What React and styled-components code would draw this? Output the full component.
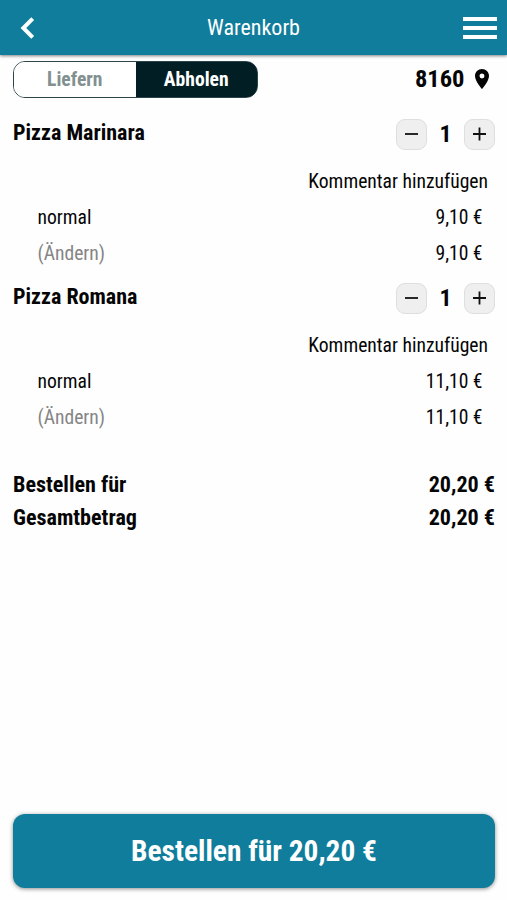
import React from "react";
import styled, { createGlobalStyle } from "styled-components";

const teal = "#0f7d9b";

const GlobalStyle = createGlobalStyle`
  * { box-sizing: border-box; }
  body { margin: 0; background: #fefefe; }
  button { font: inherit; font-stretch: 75%; padding: 0; cursor: pointer; }
`;

const Page = styled.div`
  display: flex;
  flex-direction: column;
  height: 900px;
  font-family: "Roboto Condensed", Roboto, sans-serif;
  font-stretch: 75%;
  font-size: 19.6px;
  font-weight: 450;
  color: #050505;
  overflow: hidden;
`;

const Header = styled.header`
  display: grid;
  grid-template-columns: 60px 1fr 60px;
  align-items: center;
  height: 55px;
  flex: none;
  background: ${teal};
  color: #fff;
  box-shadow: 0 1px 3px rgba(0, 0, 0, 0.5);
`;

const HeaderButton = styled.button`
  display: flex;
  justify-content: ${(p) => p.$align};
  border: 0;
  background: none;
  color: #fff;
  padding: 0 10px 0 20px;
`;

const Title = styled.h1`
  margin: 0;
  text-align: center;
  font-size: 22px;
  font-weight: 450;
  line-height: 55px;
`;

const Toolbar = styled.div`
  display: flex;
  align-items: center;
  justify-content: space-between;
  height: 37px;
  margin: 6px 13px 0;
  flex: none;
`;

const Segments = styled.div`
  display: flex;
  width: 245px;
  height: 37px;
  border: 1px solid #2c454b;
  border-radius: 12px;
  background: linear-gradient(90deg, #fff 50%, #021e25 50%);
  overflow: hidden;
`;

const Segment = styled.button`
  flex: 1;
  border: 0;
  padding-bottom: 1px;
  font-weight: 700;
  font-size: 19.6px;
  background: ${(p) => (p.$active ? "#021e25" : "#fff")};
  color: ${(p) => (p.$active ? "#fff" : "#829090")};
`;

const Postcode = styled.div`
  display: flex;
  align-items: center;
  gap: 11px;
  padding: 0 4.6px 2px 0;
  font-size: 24.5px;
  font-weight: 700;
`;

const Item = styled.section`
  height: 164px;
  flex: none;
  padding: 0 12px 0 13px;
`;

const ItemHead = styled.div`
  display: flex;
  justify-content: space-between;
  height: 31px;
`;

const ItemName = styled.h2`
  margin: 0;
  font-size: 22px;
  line-height: 27px;
  font-weight: 700;
`;

const Stepper = styled.div`
  display: grid;
  grid-template-columns: 31px 37px 31px;
  align-items: center;
  text-align: center;
`;

const StepButton = styled.button`
  display: grid;
  place-items: center;
  width: 31px;
  height: 31px;
  border: 1px solid #dedede;
  border-radius: 9px;
  background: #efefef;
  color: #111;
`;

const Count = styled.span`
  padding-bottom: 1px;
  font-size: 24px;
  font-weight: 700;
`;

const Comment = styled.div`
  margin-top: 14px;
  padding-right: 7px;
  height: 36px;
  line-height: 36px;
  text-align: right;
`;

const Line = styled.div`
  display: flex;
  justify-content: space-between;
  height: 36px;
  line-height: 36px;
  padding: 0 12.5px 0 24.5px;
`;

const Muted = styled.span`
  color: #858585;
`;

const Totals = styled.div`
  flex: none;
  margin-top: 21px;
  padding: 0 12px 0 13px;
`;

const Total = styled.div`
  display: flex;
  justify-content: space-between;
  height: 33px;
  line-height: 33px;
  font-size: 22.1px;
  font-weight: 700;
`;

const OrderButton = styled.button`
  margin: auto 12px 12px 13px;
  height: 74px;
  flex: none;
  border: 0;
  border-radius: 12px;
  padding-bottom: 1px;
  background: ${teal};
  color: #fff;
  font-size: 29.4px;
  font-weight: 700;
  box-shadow: 0 1px 4px rgba(0, 0, 0, 0.45);
`;

const items = [
  { name: "Pizza Marinara", price: "9,10 €" },
  { name: "Pizza Romana", price: "11,10 €" },
];

function CartItem({ name, price }) {
  return (
    <Item>
      <ItemHead>
        <ItemName>{name}</ItemName>
        <Stepper>
          <StepButton aria-label="−">
            <svg width="15" height="15" viewBox="0 0 15 15" stroke="currentColor" strokeWidth="1.8">
              <path d="M1 7h13" />
            </svg>
          </StepButton>
          <Count>1</Count>
          <StepButton aria-label="+">
            <svg width="15" height="15" viewBox="0 0 15 15" stroke="currentColor" strokeWidth="1.8">
              <path d="M1 7h13M7.5 .5v13" />
            </svg>
          </StepButton>
        </Stepper>
      </ItemHead>
      <Comment><span>Kommentar hinzufügen</span></Comment>
      <Line><span>normal</span><span>{price}</span></Line>
      <Line><Muted>(Ändern)</Muted><span>{price}</span></Line>
    </Item>
  );
}

const Items = styled.div`
  margin-top: 20.6px;
  flex: none;
`;

const MenuIcon = styled.svg`
  flex: none;
`;

export default function App() {
  return (
    <Page>
      <GlobalStyle />
      <Header>
        <HeaderButton $align="flex-start">
          <svg width="16" height="22" viewBox="0 0 16 22" fill="none" stroke="currentColor" strokeWidth="4">
            <path d="M12.7 1.7L3.4 11l9.3 9.3" />
          </svg>
        </HeaderButton>
        <Title>Warenkorb</Title>
        <HeaderButton $align="flex-end">
          <MenuIcon width="34" height="24" viewBox="0 0 34 24" fill="currentColor">
            <path d="M0 1h34v4H0zM0 10h34v4H0zM0 19h34v4H0z" />
          </MenuIcon>
        </HeaderButton>
      </Header>
      <Toolbar>
        <Segments>
          <Segment>Liefern</Segment>
          <Segment $active>Abholen</Segment>
        </Segments>
        <Postcode>
          <span>8160</span>
          <svg width="14" height="20" viewBox="5 2 14 20" fill="currentColor">
            <path d="M12 2C8.13 2 5 5.13 5 9c0 5.25 7 13 7 13s7-7.75 7-13c0-3.87-3.13-7-7-7zm0 9.5a2.5 2.5 0 0 1 0-5 2.5 2.5 0 0 1 0 5z" />
          </svg>
        </Postcode>
      </Toolbar>
      <Items>
        {items.map((item) => <CartItem key={item.name} {...item} />)}
      </Items>
      <Totals>
        <Total><span>Bestellen für</span><span>20,20 €</span></Total>
        <Total><span>Gesamtbetrag</span><span>20,20 €</span></Total>
      </Totals>
      <OrderButton>Bestellen für 20,20 €</OrderButton>
    </Page>
  );
}
